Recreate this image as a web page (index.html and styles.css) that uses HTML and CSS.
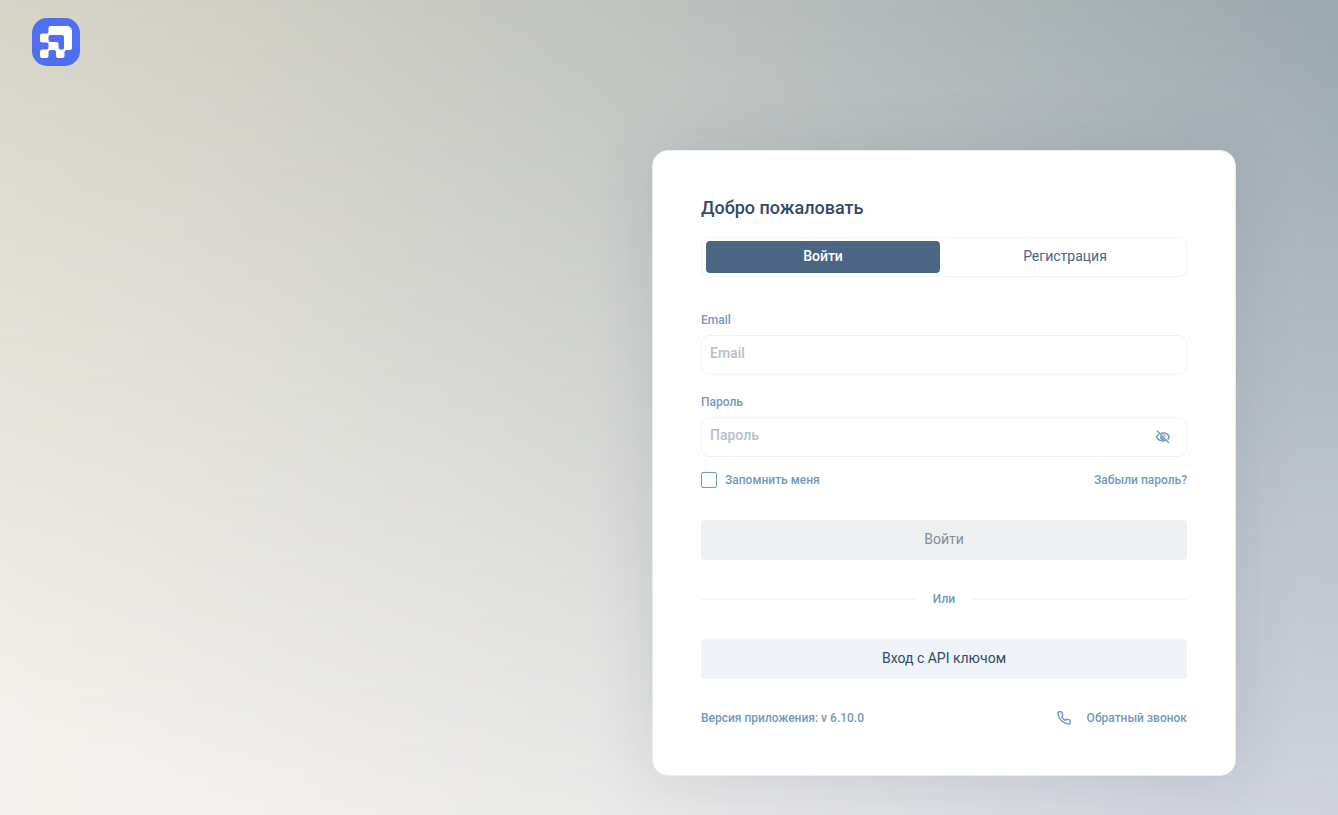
FILE: index.html
```html
<!DOCTYPE html>
<html lang="ru">
<head>
  <meta charset="utf-8">
  <title>Вход</title>
  <link rel="stylesheet" href="styles.css">
</head>
<body>

  <header class="header">
    <a href="#" class="logo" aria-label="Главная">
      <svg width="48" height="48" viewBox="0 0 48 48">
        <rect width="48" height="48" rx="15" fill="#506ef0"/>
        <path fill="#fff" fill-rule="evenodd" d="M18.500 8H35a5 5 0 0 1 5 5v17a2 2 0 0 1-2 2h-3.500a2 2 0 0 0-2 2v4a2 2 0 0 1-2 2H26a2 2 0 0 1-2-2v-4a2 2 0 0 0-2-2h-3.500a2 2 0 0 0-2 2v4a2 2 0 0 1-2 2H10a2 2 0 0 1-2-2v-4.500a2 2 0 0 1 2-2h4.500a2 2 0 0 0 2-2v-3a2 2 0 0 0-2-2H10a2 2 0 0 1-2-2v-5a2 2 0 0 1 2-2h4.500a2 2 0 0 0 2-2V10a2 2 0 0 1 2-2zM18.500 17H30a2 2 0 0 1 2 2v11a1.500 1.500 0 0 1-1.500 1.500h-2a2 2 0 0 1-2-2V26a2 2 0 0 0-2-2h-6a2 2 0 0 1-2-2v-3a2 2 0 0 1 2-2z"/>
      </svg>
    </a>
  </header>

  <main class="main">
    <div class="card">
      <h1 class="title">Добро пожаловать</h1>

      <div class="tabs">
        <button type="button" class="tab active">Войти</button>
        <button type="button" class="tab">Регистрация</button>
      </div>

      <form class="form">
        <label class="label" for="email">Email</label>
        <div class="field">
          <input type="email" id="email" name="email" placeholder="Email">
        </div>

        <label class="label" for="password">Пароль</label>
        <div class="field">
          <input type="password" id="password" name="password" placeholder="Пароль">
          <button type="button" class="eye" aria-label="Показать пароль">
            <svg width="16" height="16" viewBox="0 0 16 16" fill="none" stroke="currentColor" stroke-width="1.5">
              <path d="M3.700 5.200C2.600 6 2 7 1.700 8c.9 2.300 3.400 3.900 6.300 3.900 1 0 1.900-.2 2.700-.5M6 4.300c.6-.1 1.300-.2 2-.2 2.900 0 5.400 1.600 6.300 3.900-.3.900-.9 1.700-1.700 2.300"/>
              <path d="M2 1.800L14 14"/>
              <path fill="currentColor" stroke="none" d="M5.400 6.600l4 4a2.900 2.900 0 0 1-4-4zM7.600 5.200a2.900 2.900 0 0 1 3.200 3.200z"/>
            </svg>
          </button>
        </div>

        <div class="row options">
          <label class="remember"><input type="checkbox" name="remember">Запомнить меня</label>
          <a href="#">Забыли пароль?</a>
        </div>

        <button type="submit" class="btn" disabled>Войти</button>
        <div class="divider">Или</div>
        <button type="button" class="btn btn-api">Вход с API ключом</button>
      </form>

      <div class="row footer">
        <span>Версия приложения: v 6.10.0</span>
        <a href="#" class="call">
          <svg width="16" height="16" viewBox="-1 -1 26 26" fill="none" stroke="currentColor" stroke-width="2.400" stroke-linejoin="round">
            <path d="M22 16.920v3a2 2 0 0 1-2.180 2 19.790 19.790 0 0 1-8.630-3.070 19.500 19.500 0 0 1-6-6 19.790 19.790 0 0 1-3.070-8.670A2 2 0 0 1 4.110 2h3a2 2 0 0 1 2 1.720c.127.960.361 1.903.7 2.810a2 2 0 0 1-.45 2.110L8.090 9.910a16 16 0 0 0 6 6l1.270-1.270a2 2 0 0 1 2.110-.45c.907.339 1.850.573 2.810.7A2 2 0 0 1 22 16.920z"/>
          </svg>
          Обратный звонок
        </a>
      </div>
    </div>
  </main>

</body>
</html>
```

FILE: styles.css
```css
* {
  box-sizing: border-box;
}
body {
  position: relative;
  display: flex;
  flex-direction: column;
  min-height: 100vh;
  margin: 0;
  font-family: Roboto, sans-serif;
  font-size: 12px;
  font-weight: 500;
  line-height: 16px;
  color: #7598bd;
  background: linear-gradient(95deg, #d3d0c2 0%, #cecdc1 15%, #b7bdba 52%, #9ba9b0 95%);
}
/* light lower half, fades in from the top */
body::before {
  content: "";
  position: absolute;
  inset: 0;
  z-index: -1;
  background: linear-gradient(to right, #f6f2ee 0%, #ecebea 45%, #d5d8e3 92%);
  -webkit-mask-image: linear-gradient(185deg, transparent, #000 97%);
  mask-image: linear-gradient(185deg, transparent, #000 97%);
}
a {
  color: inherit;
  text-decoration: none;
}
button,
input {
  font: inherit;
}
button {
  padding: 0;
  border: none;
  cursor: pointer;
}
svg {
  display: block;
}
.header {
  display: flex;
  padding: 18px 32px;
}
.main {
  display: flex;
  flex: 1;
  justify-content: flex-end;
  align-items: center;
  padding: 27px 102px 0;
}
.card {
  width: 100%;
  max-width: 584px;
  padding: 48px;
  border: 1px solid #e9eef4;
  border-radius: 16px;
  background: #fff;
  box-shadow: 0 0 64px rgba(40, 60, 80, 0.12);
}
.title {
  margin: 0 0 20px;
  font-size: 18px;
  font-weight: 500;
  line-height: 18px;
  color: #324a65;
}
.tabs {
  display: flex;
  gap: 8px;
  margin-bottom: 35px;
  padding: 3px 4px;
  border: 1px solid #f2f3ee;
  border-radius: 8px;
}
.tab {
  flex: 1;
  height: 32px;
  padding-bottom: 2px;
  border-radius: 4px;
  font-size: 14px;
  font-weight: 400;
  color: #4a6683;
  background: none;
}
.tab.active {
  font-weight: 500;
  color: #fff;
  background: #4a6683;
}
.label {
  display: block;
  margin-bottom: 7px;
}
.field {
  display: flex;
  align-items: center;
  height: 40px;
  margin-bottom: 19px;
  padding: 0 15px 0 8px;
  border: 1px solid #eef2f7;
  border-radius: 8px;
}
.field input {
  flex: 1;
  min-width: 0;
  height: 100%;
  padding: 0 0 4px;
  border: none;
  outline: none;
  font-size: 14px;
  color: #324a65;
  background: none;
}
.field input::placeholder {
  color: #b6beca;
}
.eye {
  color: #7598bd;
  background: none;
}
.row {
  display: flex;
  justify-content: space-between;
  align-items: center;
}
.options {
  margin: -4px 0 32px;
}
.remember {
  display: flex;
  align-items: center;
  gap: 8px;
}
.remember input {
  appearance: none;
  width: 16px;
  height: 16px;
  margin: 0;
  border: 1px solid #7598bd;
  border-radius: 2px;
}
.btn {
  display: block;
  width: 100%;
  height: 40px;
  padding-bottom: 2px;
  border-radius: 4px;
  font-size: 14px;
  font-weight: 400;
}
.btn:disabled {
  color: #838d99;
  background: #eeeff1;
  cursor: default;
}
.btn-api {
  color: #324a65;
  background: #f0f4f8;
}
.divider {
  display: flex;
  align-items: center;
  gap: 16px;
  margin: 31px 0 32px;
}
.divider::before,
.divider::after {
  content: "";
  flex: 1;
  height: 2px;
  background: #f4f7fb;
}
.footer {
  margin-top: 30px;
  line-height: 18px;
}
.call {
  display: flex;
  align-items: center;
  gap: 15px;
}
```
